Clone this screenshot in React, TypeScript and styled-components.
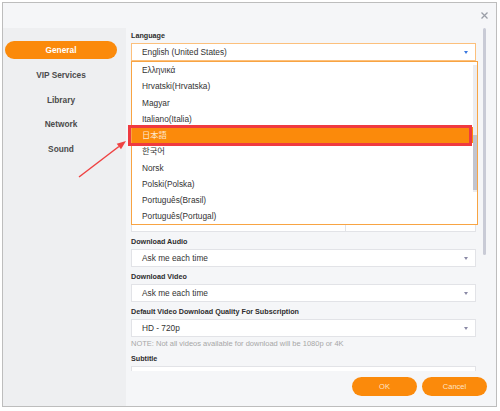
import React, { ReactElement } from 'react'
import styled, { createGlobalStyle, css } from 'styled-components'

const orange = '#fb8a0b'

const GlobalStyle = createGlobalStyle`
  html, body {
    margin: 0;
    padding: 0;
    background: #ffffff;
  }
  body {
    font-family: "Liberation Sans", Arial, sans-serif;
  }
  * {
    box-sizing: border-box;
  }
`

const Window = styled.div`
  position: relative;
  margin: 2px 0 0 2px;
  width: 495px;
  height: 405px;
  border: 1px solid #bdbdbd;
  background: #f5f6f8;
  display: flex;
  flex-direction: column;
`

const TitleBar = styled.div`
  height: 25px;
  flex-shrink: 0;
  display: flex;
  align-items: center;
  justify-content: flex-end;
  padding-right: 8px;
`

const Body = styled.div`
  flex: 1;
  min-height: 0;
  display: flex;
`

const Sidebar = styled.nav`
  width: 123px;
  flex-shrink: 0;
  background: #eeeff1;
  padding: 13px 9px 0 2px;
  display: flex;
  flex-direction: column;
  gap: 6.75px;
`

const NavItem = styled.div<{ $active?: boolean }>`
  height: 18px;
  border-radius: 9px;
  display: flex;
  align-items: center;
  justify-content: center;
  font-size: 8.3px;
  font-weight: bold;
  color: #4b4b4b;
  ${props => props.$active && css`
    background: ${orange};
    color: #ffffff;
  `}
`

const Main = styled.main`
  flex: 1;
  min-width: 0;
  display: flex;
  flex-direction: column;
`

const Scroller = styled.div`
  flex: 0 0 343px;
  display: flex;
  overflow: hidden;
  padding-left: 5px;
`

const FieldColumn = styled.div`
  flex: 0 0 345px;
  display: flex;
  flex-direction: column;
`

const Gutter = styled.div`
  flex: 1;
  padding-left: 7px;
`

const GutterThumb = styled.div`
  width: 3px;
  height: 227px;
  border-radius: 2px;
  background: #c9cbd6;
`

const Field = styled.div`
  flex-shrink: 0;
  display: flex;
  flex-direction: column;
`

const Label = styled.div<{ $first?: boolean }>`
  padding: ${props => props.$first ? '2px 0 1px' : '4px 0 1px'};
  line-height: 12px;
  font-size: 7.2px;
  font-weight: bold;
  color: #2d2d2d;
  white-space: nowrap;
`

const Select = styled.div<{ $open?: boolean }>`
  position: relative;
  flex-shrink: 0;
  height: 18px;
  background: #ffffff;
  border: 1px solid ${props => props.$open ? '#fcc07c' : '#e2e3e7'};
  padding: 0 7px 0 10px;
  display: flex;
  align-items: center;
  justify-content: space-between;
  font-size: 8.3px;
  color: #333333;
`

const Caret = styled.span<{ $blue?: boolean }>`
  width: 0;
  height: 0;
  border-left: 2.5px solid transparent;
  border-right: 2.5px solid transparent;
  border-top: 3px solid ${props => props.$blue ? '#3a78e0' : '#8b8aa6'};
`

// folder picker row, mostly hidden under the open language list
const PathRow = styled.div`
  flex-shrink: 0;
  margin-top: 153px;
  height: 18px;
  display: flex;
  background: #ffffff;
  border: 1px solid #e2e3e7;
`

const PathCell = styled.div<{ $narrow?: boolean }>`
  flex: ${props => props.$narrow ? '0 0 130px' : '1'};
  border-left: ${props => props.$narrow ? '1px solid #e2e3e7' : 'none'};
`

const Note = styled.div`
  padding-top: 2px;
  line-height: 10px;
  font-size: 7.5px;
  color: #a7a7a7;
  white-space: nowrap;
`

const DropList = styled.div`
  position: absolute;
  top: calc(100% + 1px);
  left: -1px;
  width: 347px;
  height: 164px;
  background: #ffffff;
  border: 1px solid #f8a443;
  display: flex;
  z-index: 2;
`

const Options = styled.div`
  flex: 1;
  display: flex;
  flex-direction: column;
`

const Option = styled.div<{ $selected?: boolean }>`
  position: relative;
  height: 16.25px;
  line-height: 16.25px;
  padding-left: 10px;
  font-family: "Liberation Sans", Arial, "Noto Sans CJK JP", "Noto Sans CJK KR", sans-serif;
  font-size: 8.3px;
  color: #333333;
  ${props => props.$selected && css`
    background: ${orange};
    color: #fde7cf;
    &::after {
      content: '';
      position: absolute;
      top: -2px;
      bottom: -3px;
      left: -4px;
      right: 1px;
      border: 3px solid #ef3a40;
    }
  `}
`

const ListTrack = styled.div`
  width: 4px;
  margin: 3px 0 0;
  height: 127px;
  background: #ececef;
  padding-top: 70px;
`

const ListThumb = styled.div`
  height: 55px;
  background: #c2c4ce;
`

const Footer = styled.footer`
  flex: 1;
  display: flex;
  justify-content: flex-end;
  align-items: flex-start;
  gap: 5px;
  padding: 6px 9px 0 0;
`

const FooterButton = styled.button`
  width: 65px;
  height: 19px;
  border: none;
  border-radius: 10px;
  background: ${orange};
  color: #fde4c7;
  font-family: "Liberation Sans", Arial, sans-serif;
  font-size: 7.5px;
  padding: 0;
`

const Pointer = styled.svg`
  position: absolute;
  left: 72px;
  top: 135px;
  overflow: visible;
  z-index: 3;
`

const navItems = ['General', 'VIP Services', 'Library', 'Network', 'Sound']

const languages = [
  'Ελληνικά',
  'Hrvatski(Hrvatska)',
  'Magyar',
  'Italiano(Italia)',
  '日本語',
  '한국어',
  'Norsk',
  'Polski(Polska)',
  'Português(Brasil)',
  'Português(Portugal)',
]

const downloadFields = [
  { id: 'audio', label: 'Download Audio', value: 'Ask me each time' },
  { id: 'video', label: 'Download Video', value: 'Ask me each time' },
]

function CloseIcon(): ReactElement {
  return (
    <svg width="7" height="7" viewBox="0 0 7 7">
      <path d="M0.5 0.5 L6.5 6.5 M6.5 0.5 L0.5 6.5" stroke="#9a9ea7" strokeWidth="1.3" />
    </svg>
  )
}

function App(): ReactElement {
  return (<>
    <GlobalStyle />
    <Window>
      <TitleBar>
        <CloseIcon />
      </TitleBar>
      <Body>
        <Sidebar>
          {navItems.map((item, i) => <NavItem key={item} $active={i === 0}>{item}</NavItem>)}
        </Sidebar>
        <Main>
          <Scroller>
            <FieldColumn>
              <Field>
                <Label $first>Language</Label>
                <Select $open>
                  English (United States)
                  <Caret $blue />
                  <DropList>
                    <Options>
                      {languages.map(lang => <Option key={lang} $selected={lang === '日本語'}>{lang}</Option>)}
                    </Options>
                    <ListTrack>
                      <ListThumb />
                    </ListTrack>
                  </DropList>
                </Select>
              </Field>
              <PathRow>
                <PathCell />
                <PathCell $narrow />
              </PathRow>
              {downloadFields.map(field => <Field key={field.id}>
                <Label>{field.label}</Label>
                <Select>{field.value}<Caret /></Select>
              </Field>)}
              <Field>
                <Label>Default Video Download Quality For Subscription</Label>
                <Select>HD - 720p<Caret /></Select>
                <Note>NOTE: Not all videos available for download will be 1080p or 4K</Note>
              </Field>
              <Field>
                <Label>Subtitle</Label>
                <Select />
              </Field>
            </FieldColumn>
            <Gutter>
              <GutterThumb />
            </Gutter>
          </Scroller>
          <Footer>
            <FooterButton>OK</FooterButton>
            <FooterButton>Cancel</FooterButton>
          </Footer>
        </Main>
      </Body>
      <Pointer width="56" height="46" viewBox="0 0 56 46">
        <line x1="4" y1="39" x2="43.9" y2="8.5" stroke="#ef4242" strokeWidth="1.5" />
        <polygon points="51,3 46,11.3 41.7,5.7" fill="#ef4242" />
      </Pointer>
    </Window>
  </>)
}

export default App
